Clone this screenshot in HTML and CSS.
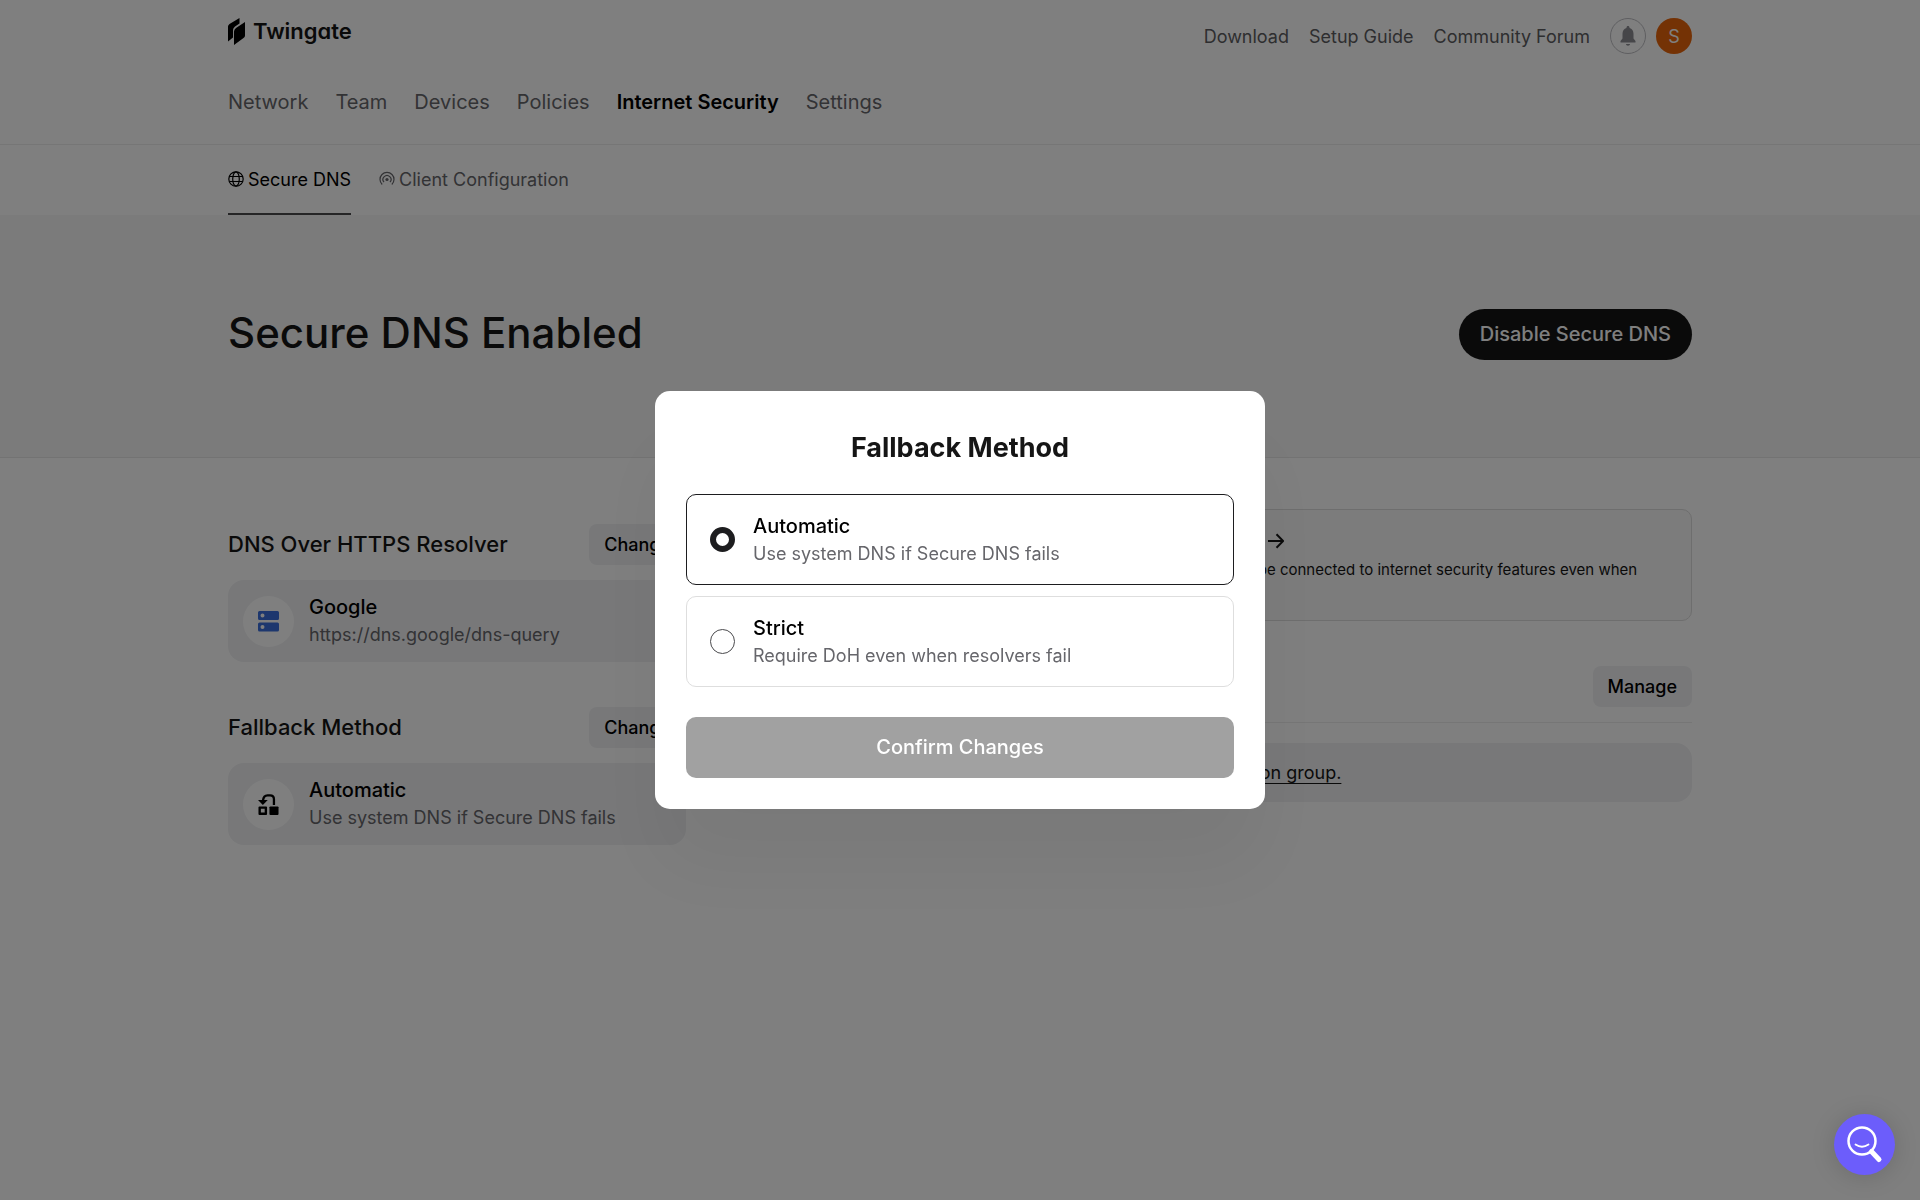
FILE: index.html
```html
<!DOCTYPE html>
<html lang="en">
<head>
<meta charset="utf-8">
<meta name="viewport" content="width=device-width, initial-scale=1">
<title>Secure DNS - Twingate</title>
<link rel="stylesheet" href="styles.css">
</head>
<body>
<header class="header">
  <div class="container">
    <div class="topbar">
      <a class="brand" href="#">
        <svg class="brand-mark" viewBox="0 0 17 27" aria-hidden="true"><path d="M0 8.500Q0 7 1.500 6L11.500 0v5.600L7 8.500Q5 10 5 12V19.500L0 23.500z"/><path d="M6 13.500Q6 11.500 8 10L17 4v13.500Q17 19 15.500 20L6 27z"/></svg>
        <span class="brand-name">Twingate</span>
      </a>
      <div class="utility">
        <a href="#">Download</a>
        <a href="#">Setup Guide</a>
        <a href="#">Community Forum</a>
        <div class="account">
          <button class="bell" type="button" aria-label="Notifications">
            <svg viewBox="0 0 16 20" aria-hidden="true"><path d="M8 0c.9 0 1.500.6 1.500 1.500v.6C12 2.800 13.500 5 13.500 7.800V12.500l2 2.500v1.500H.5V15l2-2.500V7.800C2.500 5 4 2.800 6.500 2.100v-.6C6.500.6 7.100 0 8 0zM6 18h4c0 1-.9 1.700-2 1.700S6 19 6 18z"/></svg>
          </button>
          <button class="avatar" type="button" aria-label="Account">S</button>
        </div>
      </div>
    </div>
    <nav class="nav" aria-label="Main">
      <a href="#">Network</a>
      <a href="#">Team</a>
      <a href="#">Devices</a>
      <a href="#">Policies</a>
      <a class="current" href="#">Internet Security</a>
      <a href="#">Settings</a>
    </nav>
  </div>
</header>

<nav class="tabs" aria-label="Internet Security">
  <div class="container tabs-row">
    <a class="tab active" href="#">
      <svg viewBox="0 0 16 16" aria-hidden="true"><circle cx="8" cy="8" r="7.200"/><ellipse cx="8" cy="8" rx="3.300" ry="7.200"/><path d="M1.500 5.500h13M1.500 10.500h13"/></svg>
      Secure DNS
    </a>
    <a class="tab" href="#">
      <svg viewBox="0 0 16 16" aria-hidden="true"><path d="M3.200 13.500a7 7 0 1 1 9.600 0"/><path d="M5 11.200a4 4 0 1 1 6 0"/><circle class="dot" cx="8" cy="8.500" r="1.600"/></svg>
      Client Configuration
    </a>
  </div>
</nav>

<section class="banner">
  <div class="container banner-row">
    <h1>Secure DNS Enabled</h1>
    <button class="pill" type="button">Disable Secure DNS</button>
  </div>
</section>

<main class="container content">
  <div class="column">
    <section class="setting">
      <div class="setting-head">
        <h2>DNS Over HTTPS Resolver</h2>
        <button class="small-button" type="button">Change</button>
      </div>
      <div class="setting-card">
        <span class="disc">
          <svg viewBox="0 0 21 21" aria-hidden="true"><path fill="#3b6fdc" fill-rule="evenodd" d="M1.500 0h18A1.500 1.500 0 0 1 21 1.500v6A1.500 1.500 0 0 1 19.500 9h-18A1.500 1.500 0 0 1 0 7.500v-6A1.500 1.500 0 0 1 1.500 0zM4.500 2.500a2 2 0 1 0 0 4 2 2 0 0 0 0-4zM1.500 11.500h18A1.500 1.500 0 0 1 21 13v6a1.500 1.500 0 0 1-1.500 1.500h-18A1.500 1.500 0 0 1 0 19v-6a1.500 1.500 0 0 1 1.500-1.500zM4.500 14a2 2 0 1 0 0 4 2 2 0 0 0 0-4z"/></svg>
        </span>
        <div class="pair">
          <strong>Google</strong>
          <span>https://dns.google/dns-query</span>
        </div>
      </div>
    </section>
    <section class="setting">
      <div class="setting-head">
        <h2>Fallback Method</h2>
        <button class="small-button" type="button">Change</button>
      </div>
      <div class="setting-card">
        <span class="disc">
          <svg viewBox="0 0 22 22" aria-hidden="true"><path d="M16.700 11.500V5.500Q16.700 1.500 12.700 1.500H10Q5.800 1.500 5.200 7" fill="none" stroke="#000" stroke-width="2.400"/><path d="M0 6.300h10.200L5.100 11.500z"/><path fill-rule="evenodd" d="M1.500 13h7a1 1 0 0 1 1 1v7a1 1 0 0 1-1 1H1.500a1 1 0 0 1-1-1v-7a1 1 0 0 1 1-1zM3 15.500v4h4v-4z"/><rect x="12" y="13" width="9.500" height="9" rx="1"/></svg>
        </span>
        <div class="pair">
          <strong>Automatic</strong>
          <span>Use system DNS if Secure DNS fails</span>
        </div>
      </div>
    </section>
  </div>

  <div class="column">
    <section class="callout">
      <h3>Get Always-On Internet Security with the Client Settings
        <svg viewBox="0 0 16 16" aria-hidden="true"><path d="M0 8h15M8.500 1.200 15.200 8l-6.700 6.800"/></svg>
      </h3>
      <p>Configure the Twingate Client so that all your users and devices will be connected to internet security features even when disconnected from Twingate.</p>
    </section>
    <section>
      <div class="setting-head exceptions-head">
        <h2>Exceptions</h2>
        <button class="small-button" type="button">Manage</button>
      </div>
      <div class="notice"><a href="#">No Groups are exempt from Secure DNS. Add an exemption group.</a></div>
    </section>
  </div>
</main>

<div class="backdrop">
  <form class="modal" role="dialog" aria-modal="true" aria-labelledby="modal-title">
    <h2 id="modal-title">Fallback Method</h2>
    <div class="options">
      <label class="option">
        <input type="radio" name="method" value="automatic" checked>
        <span class="pair"><strong>Automatic</strong><span>Use system DNS if Secure DNS fails</span></span>
      </label>
      <label class="option">
        <input type="radio" name="method" value="strict">
        <span class="pair"><strong>Strict</strong><span>Require DoH even when resolvers fail</span></span>
      </label>
    </div>
    <button class="confirm" type="submit" disabled>Confirm Changes</button>
  </form>
</div>

<button class="help" type="button" aria-label="Search help">
  <svg viewBox="0 0 36 38" aria-hidden="true"><circle cx="15" cy="15" r="13.500" fill="none" stroke="#fff" stroke-width="2.500"/><path d="M8.500 18.500c4 2.800 9 2.800 13 0" fill="none" stroke="#fff" stroke-width="1.800" stroke-linecap="round"/><path d="m24.500 25.500 7.500 8" fill="none" stroke="#fff" stroke-width="5" stroke-linecap="round"/></svg>
</button>
</body>
</html>
```
FILE: styles.css
```css
* {
  box-sizing: border-box;
}

body {
  margin: 0;
  min-height: 100vh;
  background: #fff;
  color: #151515;
  font-family: Inter, "Liberation Sans", sans-serif;
  font-size: 18px;
  line-height: 27px;
}

h1, h2, h3, p {
  margin: 0;
  font-weight: 500;
}

a {
  color: inherit;
  text-decoration: none;
}

button {
  font: inherit;
  border: 0;
  padding: 0;
}

svg {
  display: block;
  flex: none;
}

.container {
  max-width: 1464px;
  margin: 0 auto;
}

/* Header */
.header {
  border-bottom: 1px solid #ededed;
}

.topbar {
  display: flex;
  justify-content: space-between;
  align-items: flex-start;
  height: 72px;
  padding-top: 18px;
}

.brand {
  display: flex;
  align-items: center;
  gap: 8px;
}

.brand-mark {
  width: 17px;
  height: 27px;
}

.brand-name {
  font-size: 22px;
  font-weight: 600;
  font-feature-settings: "cv11";
}

.utility {
  display: flex;
  align-items: center;
  gap: 20px;
  color: #5c5c60;
}

.account {
  display: flex;
  gap: 10px;
}

.bell,
.avatar {
  display: grid;
  place-items: center;
  width: 36px;
  height: 36px;
  border-radius: 50%;
}

.bell {
  border: 1px solid #bdbdc2;
  background: none;
}

.bell svg {
  width: 16px;
  height: 20px;
  fill: #8c8c92;
}

.avatar {
  background: #e8650a;
  color: #fff;
}

.nav {
  display: flex;
  align-items: center;
  gap: 27px;
  height: 60px;
  margin-bottom: 12px;
  font-size: 20px;
  color: #66666b;
}

.nav .current {
  color: #000;
  font-weight: 600;
}

/* Section tabs */
.tabs-row {
  display: flex;
  gap: 28px;
  height: 70px;
}

.tab {
  display: flex;
  align-items: center;
  gap: 4px;
  border-bottom: 2px solid transparent;
  color: #66666b;
}

.tab.active {
  border-bottom-color: #4a4a4d;
  color: #000;
}

.tab svg {
  width: 16px;
  height: 16px;
  fill: none;
  stroke: currentColor;
  stroke-width: 1.2;
}

.tab .dot {
  fill: currentColor;
  stroke: none;
}

/* Banner */
.banner {
  background: #f6f6f6;
  border-bottom: 1px solid #e6e6e6;
}

.banner-row {
  display: flex;
  align-items: center;
  justify-content: space-between;
  padding: 94px 0 97px;
}

h1 {
  padding-bottom: 4px;
  font-size: 42px;
  line-height: 47px;
}

.pill {
  height: 51px;
  padding: 0 21px;
  border-radius: 26px;
  background: #151515;
  color: #fff;
  font-size: 20px;
  font-weight: 500;
}

/* Page content */
.content {
  display: grid;
  grid-template-columns: 458px 1fr;
  gap: 61px;
  padding-top: 51px;
}

.column:first-child {
  padding-top: 15px;
}

.setting {
  margin-bottom: 45px;
}

.setting-head {
  display: flex;
  align-items: center;
  justify-content: space-between;
  margin-bottom: 15px;
}

.setting-head h2 {
  font-size: 22px;
}

.small-button {
  height: 41px;
  padding: 0 15px;
  border-radius: 8px;
  background: #f0f1f3;
  color: #000;
  font-weight: 500;
}

.setting-card {
  display: flex;
  align-items: center;
  gap: 15px;
  height: 82px;
  padding: 0 15px;
  border-radius: 16px;
  background: #f0f1f3;
}

.disc {
  display: grid;
  place-items: center;
  width: 51px;
  height: 51px;
  border-radius: 50%;
  background: #fff;
}

.disc svg {
  width: 21px;
  height: 21px;
}

.pair {
  display: flex;
  flex-direction: column;
  color: #66666b;
}

.pair strong {
  color: #000;
  font-size: 20px;
  font-weight: 500;
}

.callout {
  height: 112px;
  margin-bottom: 45px;
  padding: 17px 26px;
  border: 1px solid #dcdcdc;
  border-radius: 10px;
  background: #f9f9f9;
}

.callout h3 {
  display: flex;
  align-items: center;
  gap: 12px;
  font-size: 18px;
  margin-bottom: 4px;
}

.callout p {
  font-size: 15px;
  line-height: 23px;
  font-weight: 400;
}

.callout svg {
  width: 16px;
  height: 16px;
  fill: none;
  stroke: currentColor;
  stroke-width: 2;
}

.exceptions-head {
  margin-bottom: 20px;
  padding-bottom: 15px;
  border-bottom: 1px solid #ededed;
}

.notice {
  padding: 16px 26px;
  border-radius: 16px;
  background: #f0f1f3;
}

.notice a {
  text-decoration: underline;
  text-underline-offset: 4px;
}

/* Dialog */
.backdrop {
  position: fixed;
  inset: 0;
  display: grid;
  place-items: center;
  background: rgba(0, 0, 0, 0.5);
}

.modal {
  width: 610px;
  max-width: 100%;
  padding: 31px;
  border-radius: 15px;
  background: #fff;
  box-shadow: 0 60px 80px rgba(0, 0, 0, 0.05);
}

.modal h2 {
  padding: 10px 0 30px;
  font-size: 27px;
  font-weight: 700;
  line-height: 32px;
  text-align: center;
}

.options {
  display: grid;
  gap: 11px;
  margin-bottom: 30px;
}

.option {
  display: flex;
  align-items: center;
  gap: 18px;
  height: 91px;
  padding: 0 23px;
  border: 1px solid #dedede;
  border-radius: 10px;
}

.option:has(:checked) {
  border-color: #1d1d1f;
}

.option input {
  appearance: none;
  width: 25px;
  height: 25px;
  margin: 0;
  border: 1px solid #4a4a4d;
  border-radius: 50%;
}

.option input:checked {
  border: 6px solid #1d1d1f;
}

.confirm {
  width: 100%;
  height: 61px;
  border-radius: 10px;
  background: #a1a1a1;
  color: #fff;
  font-size: 20px;
  font-weight: 500;
}

/* Floating help button */
.help {
  position: fixed;
  right: 25px;
  bottom: 25px;
  display: grid;
  place-items: center;
  width: 61px;
  height: 61px;
  border-radius: 50%;
  background: #6c5dfb;
  box-shadow: 0 2px 24px rgba(0, 0, 0, 0.15);
}

.help svg {
  width: 36px;
  height: 38px;
}
```
